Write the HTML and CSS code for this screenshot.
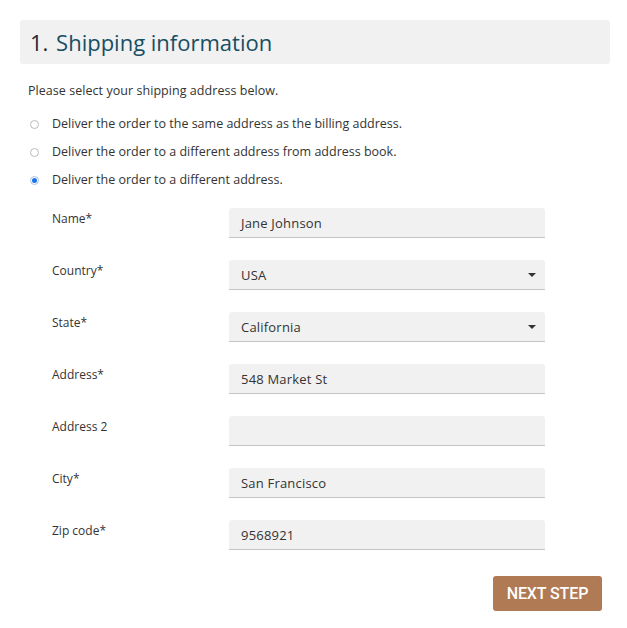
FILE: index.html
```html
<!DOCTYPE html>
<html>
<head>
<meta charset="utf-8">
<link rel="stylesheet" href="styles.css">
</head>
<body>
<div class="page">
  <div class="heading"><h1><span class="num">1.</span> Shipping information</h1></div>
  <p class="intro">Please select your shipping address below.</p>
  <div class="options">
    <label class="opt"><span class="radio"></span>Deliver the order to the same address as the billing address.</label>
    <label class="opt"><span class="radio"></span>Deliver the order to a different address from address book.</label>
    <label class="opt"><span class="radio checked"></span>Deliver the order to a different address.</label>
  </div>
  <div class="form">
    <div class="row"><div class="lbl">Name*</div><div class="field">Jane Johnson</div></div>
    <div class="row"><div class="lbl">Country*</div><div class="field select">USA<span class="caret"></span></div></div>
    <div class="row"><div class="lbl">State*</div><div class="field select">California<span class="caret"></span></div></div>
    <div class="row"><div class="lbl">Address*</div><div class="field">548 Market St</div></div>
    <div class="row"><div class="lbl">Address 2</div><div class="field"></div></div>
    <div class="row"><div class="lbl">City*</div><div class="field">San Francisco</div></div>
    <div class="row"><div class="lbl">Zip code*</div><div class="field">9568921</div></div>
  </div>
  <div class="actions"><button class="next">NEXT STEP</button></div>
</div>
</body>
</html>
```
FILE: styles.css
```css
* { box-sizing: border-box; }
body { margin: 0; background: #fff; font-family: "Open Sans", sans-serif; color: #333; }
.page { padding: 20px 17px 0 20px; }
.heading { background: #f1f1f1; border-radius: 3px; height: 44px; display: flex; align-items: center; padding-left: 10px; }
.heading h1 { margin: 0; font-size: 22px; font-weight: 400; color: #164e63; letter-spacing: 0; }
.heading .num { color: #1b2a33; margin-right: 2px; }
.intro { margin: 19px 0 0 8px; font-size: 12.5px; letter-spacing: 0.05px; line-height: 16px; color: #333; }
.options { margin-top: 17px; display: flex; flex-direction: column; gap: 12px; }
.opt { display: flex; align-items: center; font-size: 12.5px; line-height: 16px; color: #333; padding-left: 10px; }
.radio { width: 9px; height: 9px; border: 1px solid #bbb; border-radius: 50%; margin-right: 13px; position: relative; background: #fff; flex: none; }
.radio.checked { border-color: #a9c4e6; background: #fff; }
.radio.checked::after { content: ""; position: absolute; left: 1px; top: 1px; width: 5px; height: 5px; border-radius: 50%; background: #1a73e8; }
.form { margin-top: 20px; display: flex; flex-direction: column; gap: 22px; }
.row { display: flex; }
.lbl { width: 209px; padding-left: 32px; padding-top: 3px; font-size: 12px; line-height: 16px; color: #333; }
.field { width: 316px; height: 30px; background: #f1f1f1; border-bottom: 1px solid #c4c4c4; border-radius: 3px 3px 0 0; padding: 0 12px; display: flex; align-items: center; font-size: 13px; letter-spacing: 0.2px; color: #333; position: relative; }
.caret { position: absolute; right: 9px; top: 13px; width: 0; height: 0; border-left: 4px solid transparent; border-right: 4px solid transparent; border-top: 4px solid #333; }
.actions { display: flex; justify-content: flex-end; margin-top: 26px; padding-right: 8px; }
.next { background: #b07a55; color: #fff; border: none; border-radius: 3px; width: 109px; height: 35px; font-family: Roboto, sans-serif; font-weight: 500; font-size: 16px; letter-spacing: -0.1px; padding: 0; }
```
